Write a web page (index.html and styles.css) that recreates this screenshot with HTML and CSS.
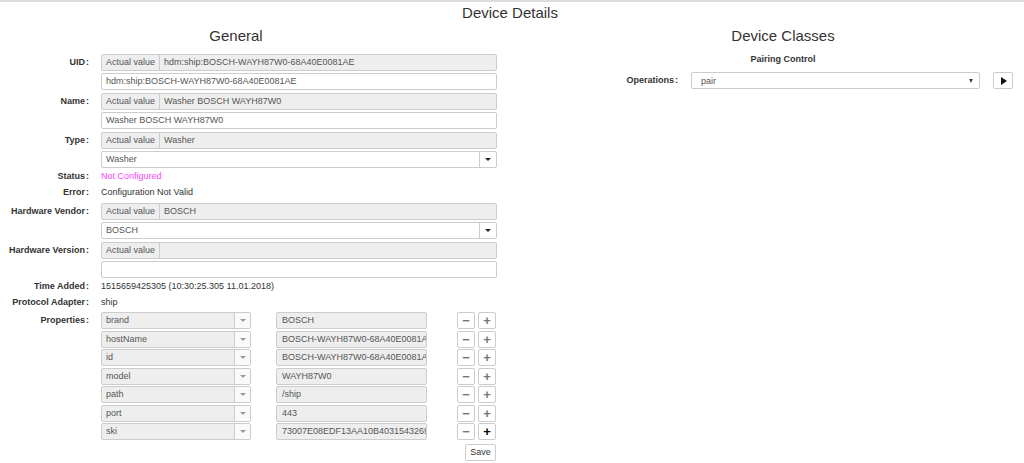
FILE: index.html
```html
<html>
    <head>
        <meta charset="utf-8">
        <title>Device Details</title>
        <link rel="stylesheet" href="styles.css">
    </head>
    <body>
        <div class="page">
            <h1 class="page-title">Device Details</h1>
            <div class="columns">
                <div class="col-general">
                    <h2>General</h2>
                    <div class="field">
                        <label>UID<span class="colon">:</span></label>
                        <div class="controls">
                            <div class="actual"><span class="addon">Actual value</span><span class="val">hdm:ship:BOSCH-WAYH87W0-68A40E0081AE</span></div>
                            <div class="input">hdm:ship:BOSCH-WAYH87W0-68A40E0081AE</div>
                        </div>
                    </div>
                    <div class="field">
                        <label>Name<span class="colon">:</span></label>
                        <div class="controls">
                            <div class="actual"><span class="addon">Actual value</span><span class="val">Washer BOSCH WAYH87W0</span></div>
                            <div class="input">Washer BOSCH WAYH87W0</div>
                        </div>
                    </div>
                    <div class="field">
                        <label>Type<span class="colon">:</span></label>
                        <div class="controls">
                            <div class="actual"><span class="addon">Actual value</span><span class="val">Washer</span></div>
                            <div class="input select"><span class="val">Washer</span><span class="caret-box"><i class="caret"></i></span></div>
                        </div>
                    </div>
                    <div class="field text first">
                        <label>Status<span class="colon">:</span></label>
                        <div class="controls status">Not Configured</div>
                    </div>
                    <div class="field text">
                        <label>Error<span class="colon">:</span></label>
                        <div class="controls">Configuration Not Valid</div>
                    </div>
                    <div class="field after-text">
                        <label>Hardware Vendor<span class="colon">:</span></label>
                        <div class="controls">
                            <div class="actual"><span class="addon">Actual value</span><span class="val">BOSCH</span></div>
                            <div class="input select"><span class="val">BOSCH</span><span class="caret-box"><i class="caret"></i></span></div>
                        </div>
                    </div>
                    <div class="field">
                        <label>Hardware Version<span class="colon">:</span></label>
                        <div class="controls">
                            <div class="actual"><span class="addon">Actual value</span><span class="val"></span></div>
                            <div class="input"></div>
                        </div>
                    </div>
                    <div class="field text first">
                        <label>Time Added<span class="colon">:</span></label>
                        <div class="controls">1515659425305 (10:30:25.305 11.01.2018)</div>
                    </div>
                    <div class="field text proto">
                        <label>Protocol Adapter<span class="colon">:</span></label>
                        <div class="controls">ship</div>
                    </div>
                    <div class="field">
                        <label>Properties<span class="colon">:</span></label>
                        <div class="controls">
                            <div class="prop">
                                <div class="key"><span class="val">brand</span><span class="caret-box"><i class="caret grey"></i></span></div>
                                <div class="pval">BOSCH</div>
                                <div class="btns"><span class="btn">&minus;</span><span class="btn">+</span></div>
                            </div>
                            <div class="prop">
                                <div class="key"><span class="val">hostName</span><span class="caret-box"><i class="caret grey"></i></span></div>
                                <div class="pval">BOSCH-WAYH87W0-68A40E0081AE</div>
                                <div class="btns"><span class="btn">&minus;</span><span class="btn">+</span></div>
                            </div>
                            <div class="prop">
                                <div class="key"><span class="val">id</span><span class="caret-box"><i class="caret grey"></i></span></div>
                                <div class="pval">BOSCH-WAYH87W0-68A40E0081AE</div>
                                <div class="btns"><span class="btn">&minus;</span><span class="btn">+</span></div>
                            </div>
                            <div class="prop">
                                <div class="key"><span class="val">model</span><span class="caret-box"><i class="caret grey"></i></span></div>
                                <div class="pval">WAYH87W0</div>
                                <div class="btns"><span class="btn">&minus;</span><span class="btn">+</span></div>
                            </div>
                            <div class="prop">
                                <div class="key"><span class="val">path</span><span class="caret-box"><i class="caret grey"></i></span></div>
                                <div class="pval">/ship</div>
                                <div class="btns"><span class="btn">&minus;</span><span class="btn">+</span></div>
                            </div>
                            <div class="prop">
                                <div class="key"><span class="val">port</span><span class="caret-box"><i class="caret grey"></i></span></div>
                                <div class="pval">443</div>
                                <div class="btns"><span class="btn">&minus;</span><span class="btn">+</span></div>
                            </div>
                            <div class="prop">
                                <div class="key"><span class="val">ski</span><span class="caret-box"><i class="caret grey"></i></span></div>
                                <div class="pval">73007E08EDF13AA10B4031543269</div>
                                <div class="btns"><span class="btn">&minus;</span><span class="btn dark">+</span></div>
                            </div>
                            <div class="save-row"><span class="btn save">Save</span></div>
                        </div>
                    </div>
                </div>
                <div class="col-classes">
                    <h2>Device Classes</h2>
                    <h3>Pairing Control</h3>
                    <div class="op-row">
                        <label>Operations<span class="colon">:</span></label>
                        <div class="op-select"><span>pair</span><i class="caret small"></i></div>
                        <span class="btn play"><i class="tri"></i></span>
                    </div>
                </div>
            </div>
        </div>
    </body>
</html>
```

FILE: styles.css
```css
body {
    margin: 0;
    font-family: "Liberation Sans", Arial, sans-serif;
    font-size: 9px;
    color: #333;
    background: #fff;
}
.page {
    border-top: 2px solid #ddd;
    height: 461px;
}
.page-title {
    font-size: 15px;
    font-weight: normal;
    line-height: 18px;
    text-align: center;
    margin: 2px 0 0 0;
    padding-right: 4px;
}
.columns {
    display: flex;
}
.col-general {
    width: 497px;
}
.col-classes {
    margin-left: 45px;
    width: 482px;
}
h2 {
    font-size: 15px;
    font-weight: normal;
    line-height: 18px;
    margin: 5px 0 9px 0;
    text-align: center;
}
.col-general h2 {
    width: 472px;
}
h3 {
    font-size: 9px;
    font-weight: bold;
    line-height: 12px;
    text-align: center;
    margin: -1px 0 7px 0;
}

/* form rows */
.field {
    display: flex;
    margin-bottom: 1px;
}
.field label {
    width: 89px;
    flex: none;
    text-align: right;
    font-weight: bold;
    line-height: 17px;
}
.colon {
    margin-left: 1px;
}
.field .controls {
    margin-left: 12px;
    width: 396px;
}
.field.text label,
.field.text .controls {
    line-height: 16px;
}
.field.text {
    margin-bottom: 0;
}
.field.text.first {
    margin-top: -3px;
}
.field.after-text {
    margin-top: 3px;
}
.status {
    color: #f4f;
}
.field.proto {
    margin-bottom: 2px;
}

.actual, .input {
    box-sizing: border-box;
    height: 17px;
    border: 1px solid #ccc;
    border-radius: 2px;
    margin-bottom: 2px;
    line-height: 15px;
    color: #555;
    display: flex;
}
.actual {
    background: #eee;
}
.actual .addon {
    padding: 0 4px;
    border-right: 1px solid #ccc;
}
.actual .val {
    padding: 0 4px;
}
.input {
    background: #fff;
    padding-left: 4px;
}
.input.select {
    padding-left: 0;
}
.input.select .val,
.key .val {
    flex: 1;
    padding-left: 4px;
}
.caret-box {
    width: 16px;
    border-left: 1px solid #ccc;
    display: flex;
    align-items: center;
    justify-content: center;
}
.caret {
    display: block;
    width: 0;
    height: 0;
    border-left: 3px solid transparent;
    border-right: 3px solid transparent;
    border-top: 3px solid #222;
}
.caret.grey {
    border-top-color: #999;
}
.caret.small {
    border-left-width: 2.5px;
    border-right-width: 2.5px;
    border-top: 4px solid #444;
}

/* properties */
.prop {
    display: flex;
    height: 17px;
    margin-bottom: 1.5px;
}
.key, .pval {
    box-sizing: border-box;
    height: 17px;
    border: 1px solid #ccc;
    border-radius: 2px;
    background: #eee;
    color: #555;
    line-height: 15px;
    display: flex;
}
.key {
    width: 150px;
}
.key .caret-box {
    background: #fafafa;
    width: 15px;
}
.pval {
    width: 151px;
    margin-left: 25px;
    padding: 0 3px 0 5px;
    overflow: hidden;
    white-space: nowrap;
}
.btns {
    margin-left: auto;
    display: flex;
    gap: 3px;
    padding-right: 1px;
}
.btn {
    box-sizing: border-box;
    display: inline-flex;
    align-items: center;
    justify-content: center;
    height: 17px;
    width: 18px;
    border: 1px solid #ccc;
    border-radius: 2px;
    background: #fff;
    color: #777;
    font-weight: bold;
    font-size: 13px;
    line-height: 15px;
}
.btn.dark {
    color: #000;
}
.save-row {
    display: flex;
    justify-content: flex-end;
    margin-top: 4px;
    padding-right: 1px;
}
.btn.save {
    width: 31px;
    font-size: 9px;
    font-weight: normal;
    color: #333;
}

/* device classes */
.op-row {
    display: flex;
    align-items: center;
}
.op-row label {
    width: 136px;
    text-align: right;
    font-weight: bold;
    line-height: 15px;
}
.op-select {
    box-sizing: border-box;
    margin-left: 13px;
    width: 289px;
    height: 17px;
    border: 1px solid #ccc;
    border-radius: 2px;
    display: flex;
    align-items: center;
    justify-content: space-between;
    padding: 0 6px 0 9px;
    color: #555;
}
.btn.play {
    margin-left: 13px;
    width: 20px;
}
.tri {
    display: block;
    width: 0;
    height: 0;
    border-top: 4px solid transparent;
    border-bottom: 4px solid transparent;
    border-left: 6px solid #111;
    margin-left: 1px;
}
```
